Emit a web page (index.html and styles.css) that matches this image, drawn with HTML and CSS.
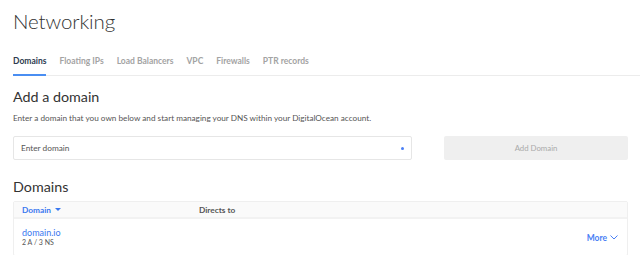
FILE: index.html
```html
<!DOCTYPE html>
<html>
<head>
<meta charset="utf-8">
<link rel="stylesheet" href="styles.css">
</head>
<body>
<div class="page">
  <h1 class="title">Networking</h1>
  <nav class="tabs">
    <a class="tab active">Domains</a>
    <a class="tab">Floating IPs</a>
    <a class="tab">Load Balancers</a>
    <a class="tab">VPC</a>
    <a class="tab">Firewalls</a>
    <a class="tab">PTR records</a>
  </nav>
  <h2 class="section-title add">Add a domain</h2>
  <p class="desc">Enter a domain that you own below and start managing your DNS within your DigitalOcean account.</p>
  <div class="form-row">
    <div class="input"><span class="placeholder">Enter domain</span><span class="req"></span></div>
    <div class="btn">Add Domain</div>
  </div>
  <h2 class="section-title domains">Domains</h2>
  <div class="table">
    <div class="thead">
      <div class="th col1">Domain <span class="caret"></span></div>
      <div class="th col2">Directs to</div>
    </div>
    <div class="row">
      <div class="col1">
        <div class="dname">domain.io</div>
        <div class="dsub">2 A / 3 NS</div>
      </div>
      <div class="more">More <svg width="8" height="5" viewBox="0 0 8 5"><path d="M0.5 0.5 L4 4 L7.5 0.5" fill="none" stroke="#4a7ff5" stroke-width="1"/></svg></div>
    </div>
  </div>
</div>
</body>
</html>
```
FILE: styles.css
```css
* { box-sizing: border-box; }
html, body { margin: 0; padding: 0; background: #fff; }
body { font-family: Lato, "Open Sans", sans-serif; color: #333; overflow: hidden; }
.page { padding: 0 12px 0 13px; }
.title { margin: 0; padding-top: 8px; font-size: 20.5px; font-weight: 300; color: #333; line-height: 26px; letter-spacing: -0.1px; }
.tabs { display: flex; gap: 13px; margin-top: 22px; border-bottom: 1px solid #ececec; margin-right: -12px; }
.tab { font-size: 8.5px; font-weight: 700; color: #a3a3a3; padding-bottom: 7px; line-height: 11px; }
.tab.active { color: #2d3b4e; border-bottom: 2px solid #4a8ef2; margin-bottom: -1px; }
.section-title { margin: 0; font-weight: 400; color: #333; font-size: 14.3px; line-height: 18px; }
.section-title.add { margin-top: 12px; }
.desc { margin: 7px 0 0; font-size: 8.2px; color: #555; line-height: 10px; }
.form-row { display: flex; margin-top: 13px; gap: 32px; }
.input { width: 399px; height: 24px; border: 1px solid #e6e6e6; border-radius: 2px; display: flex; align-items: center; justify-content: space-between; padding: 0 7px 0 7px; }
.placeholder { font-size: 8.3px; color: #555; }
.req { width: 3px; height: 3px; background: #4a7ff5; border-radius: 50%; }
.btn { flex: 1; height: 24px; background: #efefef; border-radius: 2px; display: flex; align-items: center; justify-content: center; font-size: 7.8px; color: #aaa; }
.domains { margin-top: 18px; }
.table { margin-top: 5px; border: 1px solid #efefef; border-radius: 2px; }
.thead { display: flex; height: 17px; align-items: center; background: #fafafa; border-bottom: 2px solid #f2f2f2; }
.th { font-size: 8.3px; font-weight: 700; }
.col1 { width: 185px; padding-left: 8px; }
.th.col1 { color: #3a78f0; display: flex; align-items: center; gap: 4px; }
.caret { width: 0; height: 0; border-left: 3px solid transparent; border-right: 3px solid transparent; border-top: 3px solid #3a78f0; }
.th.col2 { color: #555; }
.row { display: flex; justify-content: space-between; align-items: center; padding: 9px 0 8px; }
.dname { font-size: 9px; color: #3a78f0; line-height: 10px; }
.dsub { font-size: 7px; color: #555; line-height: 9px; }
.more { font-size: 8.5px; font-weight: 700; color: #4a7ff5; padding-right: 9px; display: flex; align-items: center; gap: 3px; }
```
